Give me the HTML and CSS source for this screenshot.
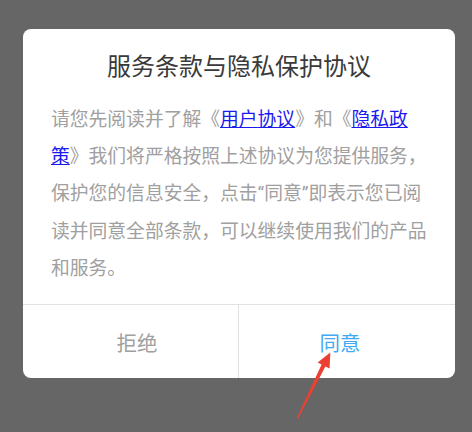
FILE: index.html
```html
<!DOCTYPE html>
<html lang="zh-CN">
<head>
<meta charset="utf-8">
<link rel="stylesheet" href="styles.css">
</head>
<body>
<div class="screen">
  <div class="dialog">
    <h1 class="title">服务条款与隐私保护协议</h1>
    <p class="body">请您先阅读并了解《<a href="#">用户协议</a>》和《<a href="#">隐私政策</a>》我们将严格按照上述协议为您提供服务，保护您的信息安全，点击“同意”即表示您已阅读并同意全部条款，可以继续使用我们的产品和服务。</p>
    <div class="actions">
      <div class="btn btn-reject">拒绝</div>
      <div class="btn btn-agree">同意</div>
    </div>
  </div>
  <svg class="arrow" width="472" height="432" viewBox="0 0 472 432">
    <polygon points="296.6,418.5 321.6,364.4 317.6,362.4 330.3,352.6 329.6,368.6 325.4,366.4 298,418.8" fill="#ec4033"/>
  </svg>
</div>
</body>
</html>
```
FILE: styles.css
```css
html, body {
  margin: 0;
  padding: 0;
}
body {
  background: #666666;
  font-family: "Roboto", "Noto Sans CJK SC", sans-serif;
}
.screen {
  position: relative;
  width: 472px;
  height: 432px;
  padding-top: 29px;
  box-sizing: border-box;
}
.dialog {
  margin-left: 23px;
  width: 432px;
  background: #ffffff;
  border-radius: 8px;
  overflow: hidden;
}
.title {
  margin: 0;
  padding-top: 23px;
  height: 30px;
  line-height: 30px;
  font-size: 24px;
  font-weight: normal;
  color: #3a3a3a;
  text-align: center;
}
.body {
  margin: 0;
  padding: 20px 26px 16px 28px;
  font-size: 18.8px;
  line-height: 37.2px;
  color: #a0a0a0;
}
.body a {
  color: #1a1aee;
  text-decoration: underline;
}
.actions {
  display: flex;
  border-top: 1px solid #e2e2e2;
  height: 73px;
}
.btn {
  flex: 1;
  display: flex;
  align-items: center;
  justify-content: center;
  font-size: 20.5px;
}
.btn-reject {
  color: #a0a0a0;
  padding-left: 13px;
  border-right: 1px solid #e2e2e2;
}
.btn-agree {
  color: #3fa9f5;
  padding-right: 14px;
}
.arrow {
  position: absolute;
  left: 0;
  top: 0;
}
```
